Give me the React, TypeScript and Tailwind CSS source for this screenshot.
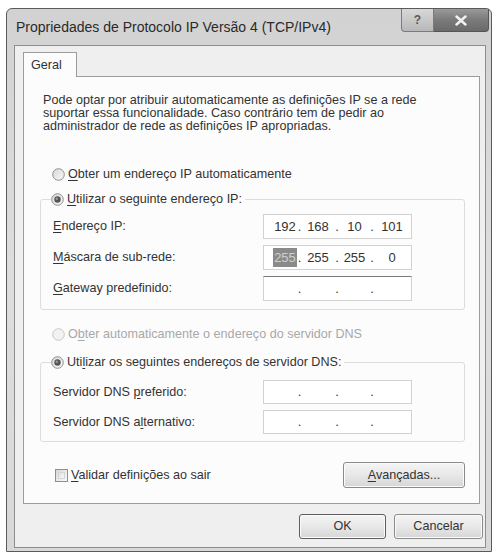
import React from "react";

const font = { fontFamily: '"Liberation Sans", Arial, sans-serif' };

function Radio({ checked = false, disabled = false }: { checked?: boolean; disabled?: boolean }) {
  return (
    <svg width="13" height="13" viewBox="0 0 13 13" className="shrink-0">
      <defs>
        <linearGradient id="rg" x1="0" y1="0" x2="1" y2="1">
          <stop offset="0" stopColor="#d6d6d6" />
          <stop offset="1" stopColor="#fafafa" />
        </linearGradient>
      </defs>
      <circle cx="6.5" cy="6.5" r="5.8" fill={disabled ? "#f2f2f2" : "url(#rg)"} stroke={disabled ? "#c8c8c8" : "#8e8f8f"} strokeWidth="1" />
      {checked && <circle cx="6.5" cy="6.5" r="3.2" fill="#555" />}
      {checked && <circle cx="5.8" cy="5.8" r="1.2" fill="#9a9a9a" />}
    </svg>
  );
}

function Checkbox() {
  return (
    <div className="w-[13px] h-[13px] shrink-0 border border-[#8e8f8f] bg-gradient-to-br from-[#d8d8d8] to-[#fbfbfb] p-[2px]">
      <div className="w-full h-full border border-[#d4d4d4] bg-gradient-to-br from-[#e0e0e0] to-[#f8f8f8]" />
    </div>
  );
}

function IpBox({ values, selectFirst = false, darkTop = false }: { values?: string[]; selectFirst?: boolean; darkTop?: boolean }) {
  const v = values ?? ["", "", "", ""];
  return (
    <div
      className={
        "ml-auto mr-[52px] w-[149px] h-full flex items-center bg-white border border-[#d2d2d2] text-[13px] text-[#333] " +
        (darkTop ? "border-t-[#7a7a7a]" : "")
      }
    >
      <span className="w-[33px] pl-[9px] text-center flex justify-center">
        {selectFirst ? <span className="bg-[#8a8a8a] text-[#cfcfcf] px-[1px]">{v[0]}</span> : v[0]}
      </span>
      <span className="w-[5px] text-center">.</span>
      <span className="w-[32px] text-center">{v[1]}</span>
      <span className="w-[6px] text-center">.</span>
      <span className="w-[29px] text-center">{v[2]}</span>
      <span className="w-[6px] text-center">.</span>
      <span className="w-[34px] text-center">{v[3]}</span>
    </div>
  );
}

function U({ children }: { children: React.ReactNode }) {
  return <span className="underline underline-offset-[2px]">{children}</span>;
}

function Button({ children, w, dark = false }: { children: React.ReactNode; w: string; dark?: boolean }) {
  return (
    <div
      className={
        w +
        " h-full rounded-[3px] border flex items-center justify-center text-[12.6px] text-[#333] bg-gradient-to-b from-[#f4f4f4] via-[#e8e8e8] to-[#d6d6d6] shadow-[inset_0_0_0_1px_#fbfbfb] " +
        (dark ? "border-[#5e5e5e]" : "border-[#8a8a8a]")
      }
    >
      {children}
    </div>
  );
}

export default function App() {
  return (
    <div className="w-[498px] h-[556px] bg-white pt-[8px] pl-[6px]" style={font}>
      <div className="w-[486px] h-[544px] border border-[#5a5a5a] rounded-t-[6px] bg-gradient-to-b from-[#d2d2d2] via-[#dedede] to-[#d8d8d8] flex flex-col">
        {/* Title bar */}
        <div className="h-[36px] flex items-start shrink-0">
          <div className="flex-1 h-full flex items-center pl-[9px] text-[14px] text-[#2a2a2a]">
            Propriedades de Protocolo IP Versão 4 (TCP/IPv4)
          </div>
          <div className="flex mr-[2px] h-[23px]">
            <div className="w-[33px] h-full border border-[#7a7a7a] border-t-0 rounded-bl-[4px] bg-gradient-to-b from-[#d8d8d8] to-[#b8b8b8] flex items-center justify-center text-[12px] font-bold text-[#5a5a5a]">
              ?
            </div>
            <div className="w-[55px] h-full border border-[#555] border-t-0 border-l-0 rounded-br-[4px] bg-gradient-to-b from-[#9a9a9a] via-[#7a7a7a] to-[#6a6a6a] flex items-center justify-center">
              <svg width="12" height="11" viewBox="0 0 12 11">
                <path d="M1.5 1.5 L10.5 9.5 M10.5 1.5 L1.5 9.5" stroke="#f2f2f2" strokeWidth="2.4" strokeLinecap="round" />
              </svg>
            </div>
          </div>
        </div>

        {/* Client area */}
        <div className="ml-[7px] mr-[5px] mb-[3px] flex-1 border border-[#8e8e8e] bg-[#efefef] flex flex-col">
          {/* Tab */}
          <div className="ml-[8px] mt-[6px] flex">
            <div className="relative z-10 -mb-px w-[54px] h-[25px] border border-b-0 border-[#9c9c9c] bg-[#fcfcfc] flex items-center pl-[7px] text-[12.6px] text-[#333]">
              Geral
            </div>
          </div>
          {/* Panel */}
          <div className="ml-[8px] w-[457px] h-[428px] border border-[#9c9c9c] bg-[#fcfcfc] flex flex-col text-[12.6px] text-[#333]">
            <p className="pl-[19px] pt-[17px] leading-[13px]">
              Pode optar por atribuir automaticamente as definições IP se a rede
              <br />
              suportar essa funcionalidade. Caso contrário tem de pedir ao
              <br />
              administrador de rede as definições IP apropriadas.
            </p>

            <div className="mt-[33px] h-[16px] pl-[28px] flex items-center gap-[3px]">
              <Radio />
              <span>
                <U>O</U>bter um endereço IP automaticamente
              </span>
            </div>

            <div className="relative ml-[16px] mt-[17px] w-[425px] border border-[#dcdcdc] rounded-[3px] pt-[14px] pb-[8px] flex flex-col gap-[6px]">
              <div className="absolute -top-[9px] left-[10px] h-[16px] pr-[3px] flex items-center gap-[3px] bg-[#fcfcfc]">
                <Radio checked />
                <span>
                  <U>U</U>tilizar o seguinte endereço IP:
                </span>
              </div>
              <div className="h-[25px] flex items-center pl-[12px]">
                <span>
                  <U>E</U>ndereço IP:
                </span>
                <IpBox values={["192", "168", "10", "101"]} />
              </div>
              <div className="h-[25px] flex items-center pl-[12px]">
                <span>
                  <U>M</U>áscara de sub-rede:
                </span>
                <IpBox values={["255", "255", "255", "0"]} selectFirst />
              </div>
              <div className="h-[25px] flex items-center pl-[12px]">
                <span>
                  <U>G</U>ateway predefinido:
                </span>
                <IpBox darkTop />
              </div>
            </div>

            <div className="mt-[16px] h-[16px] pl-[28px] flex items-center gap-[3px] text-[#a8a8a8]">
              <Radio disabled />
              <span>
                O<U>b</U>ter automaticamente o endereço do servidor DNS
              </span>
            </div>

            <div className="relative ml-[16px] mt-[20px] w-[425px] border border-[#dcdcdc] rounded-[3px] pt-[17px] pb-[7px] flex flex-col gap-[6px]">
              <div className="absolute -top-[9px] left-[10px] h-[16px] pr-[3px] flex items-center gap-[3px] bg-[#fcfcfc]">
                <Radio checked />
                <span>
                  Uti<U>l</U>izar os seguintes endereços de servidor DNS:
                </span>
              </div>
              <div className="h-[24px] flex items-center pl-[12px]">
                <span>
                  Servidor DNS <U>p</U>referido:
                </span>
                <IpBox />
              </div>
              <div className="h-[24px] flex items-center pl-[12px]">
                <span>
                  Servidor DNS a<U>l</U>ternativo:
                </span>
                <IpBox />
              </div>
            </div>

            <div className="mt-[20px] h-[26px] flex items-center pl-[31px]">
              <Checkbox />
              <span className="ml-[3px]">
                <U>V</U>alidar definições ao sair
              </span>
              <div className="ml-auto mr-[14px] h-full flex">
                <Button w="w-[122px]">
                  <span>
                    <U>A</U>vançadas...
                  </span>
                </Button>
              </div>
            </div>
          </div>

          {/* Bottom buttons */}
          <div className="mt-[10px] h-[25px] flex justify-end gap-[8px] pr-[2px]">
            <Button w="w-[87px]" dark>
              OK
            </Button>
            <Button w="w-[89px]">Cancelar</Button>
          </div>
        </div>
      </div>
    </div>
  );
}
